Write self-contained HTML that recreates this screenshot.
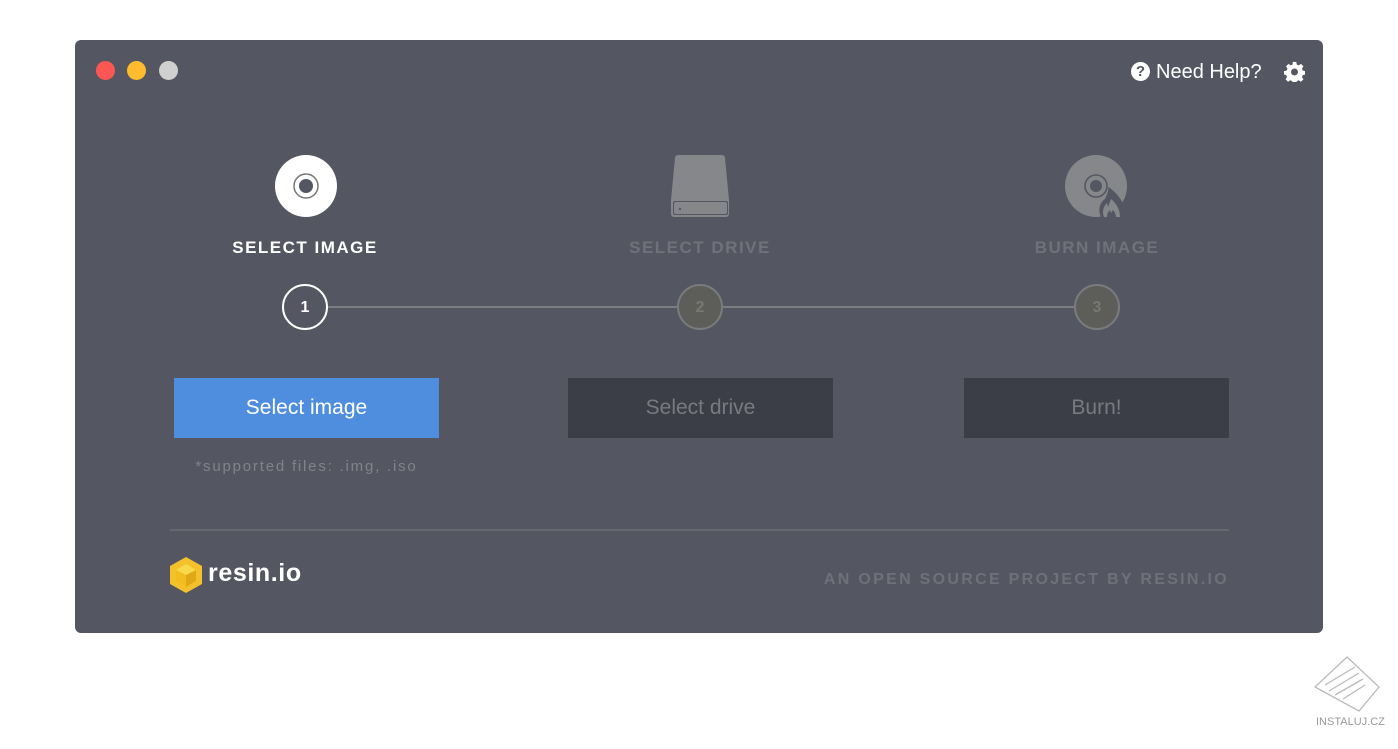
<!DOCTYPE html>
<html><head><style>
body{margin:0;width:1398px;height:749px;background:#fff;position:relative;font-family:"Liberation Sans",sans-serif;overflow:hidden}
.win{position:absolute;left:75px;top:40px;width:1248px;height:593px;background:#545761;border-radius:6px}
.a{position:absolute}
.dot{position:absolute;top:61px;width:19px;height:19px;border-radius:50%}
.lbl{position:absolute;top:238px;width:300px;text-align:center;font-weight:bold;font-size:17px;letter-spacing:1.5px}
.c{position:absolute;top:284px;width:46px;height:46px;border-radius:50%;box-sizing:border-box;text-align:center;line-height:43px;font-weight:bold;font-size:16px}
.btn{position:absolute;top:378px;height:60px;width:265px;text-align:center;line-height:60px;font-size:21px}
</style></head><body>
<div class="win"></div>
<div class="dot" style="left:96px;background:#fc5753"></div>
<div class="dot" style="left:127px;background:#fdbc2e"></div>
<div class="dot" style="left:159px;background:#d0d0d0"></div>
<div class="a" style="left:1131px;top:62px;width:19px;height:19px;border-radius:50%;background:#fff;color:#545761;font-weight:bold;font-size:15px;text-align:center;line-height:20px">?</div>
<div class="a" style="left:1156px;top:61px;color:#fff;font-size:20px">Need Help?</div>
<svg class="a" style="left:1284px;top:61px" width="21" height="21" viewBox="0 0 24 24"><path fill="#fff" d="M10 1h4l.6 3 2.2 1 2.6-1.7 2.8 2.8L20.5 8.7l1 2.3 2.5.5v4l-2.5.6-1 2.2 1.7 2.6-2.8 2.8-2.6-1.7-2.2 1-.6 2.9h-4l-.6-2.9-2.2-1-2.6 1.7-2.8-2.8 1.7-2.6-1-2.2L0 15.5v-4l3-.5 1-2.3L2.3 6.1l2.8-2.8L7.7 5l2.2-1z M12 8.5a4 4 0 1 0 0 8a4 4 0 1 0 0-8z" fill-rule="evenodd"/></svg>
<svg class="a" style="left:275px;top:155px" width="62" height="62"><circle cx="31" cy="31" r="31" fill="#fff"/><circle cx="31" cy="31" r="12" fill="none" stroke="#777" stroke-width="1.5"/><circle cx="31" cy="31" r="7" fill="#545761"/></svg>
<svg class="a" style="left:670px;top:154px" width="62" height="64"><path d="M8 1h44a3 3 0 0 1 3 3l4 42v14a3 3 0 0 1-3 3H4a3 3 0 0 1-3-3V46L5 4a3 3 0 0 1 3-3z" fill="#85878b"/><rect x="3" y="47" width="55" height="14" rx="2" fill="#545761"/><rect x="4" y="48" width="53" height="12" rx="2" fill="#85878b"/><circle cx="10" cy="55" r="1.2" fill="#545761"/></svg>
<svg class="a" style="left:1065px;top:155px" width="64" height="64"><circle cx="31" cy="31" r="31" fill="#85878b"/><circle cx="31" cy="31" r="11" fill="none" stroke="#545761" stroke-width="1.6"/><circle cx="31" cy="31" r="6" fill="#545761"/><path d="M36 62c-3-6-2-14 4-18 2-5 4-8 3-12 7 4 14 12 16 20 0 4-1 8-3 10z" fill="#545761"/><path d="M39 62c-2-5-1-10 3-14l1 4 3-8c5 4 9 10 9 18z" fill="#85878b"/><path d="M42 62c0-3 1-5 3-7l1 3 2-3c2 2 3 5 3 7z" fill="#545761"/></svg>
<div class="lbl" style="left:155px;color:#fff">SELECT IMAGE</div>
<div class="lbl" style="left:550px;color:#6f727a">SELECT DRIVE</div>
<div class="lbl" style="left:947px;color:#6f727a">BURN IMAGE</div>
<div class="a" style="left:305px;top:306px;width:792px;height:2px;background:#7b7d81"></div>
<div class="c" style="left:282px;border:2.5px solid #fff;background:#545761;color:#fff">1</div>
<div class="c" style="left:677px;border:2.5px solid #797b7d;background:#5d5d59;color:#777872">2</div>
<div class="c" style="left:1074px;border:2.5px solid #797b7d;background:#5d5d59;color:#777872">3</div>
<div class="btn" style="left:174px;background:#4f8ede;color:#fff">Select image</div>
<div class="btn" style="left:568px;background:#3b3e47;color:#777a80">Select drive</div>
<div class="btn" style="left:964px;background:#3b3e47;color:#777a80">Burn!</div>
<div class="a" style="left:164px;top:458px;width:285px;text-align:center;color:#80838a;font-size:15px;letter-spacing:1.8px">*supported files: .img, .iso</div>
<div class="a" style="left:170px;top:529px;width:1059px;height:2px;background:#65686f"></div>
<svg class="a" style="left:168px;top:556px" width="36" height="38" viewBox="0 0 36 38"><path d="M18 1l16 9v18l-16 9-16-9V10z" fill="#f4c12a"/><path d="M18 8l10 6v11l-10 6-10-6V14z" fill="#f9d94a"/><path d="M18 19l10-5v11l-10 6z" fill="#e0a814"/><path d="M18 19L8 14v11l10 6z" fill="#f1bd1f"/></svg>
<div class="a" style="left:208px;top:559px;color:#fff;font-size:25px;font-weight:bold;letter-spacing:.6px">resin.io</div>
<div class="a" style="right:169px;top:571px;color:#6e7179;font-size:16px;font-weight:bold;letter-spacing:2.3px">AN OPEN SOURCE PROJECT BY RESIN.IO</div>
<svg class="a" style="left:1313px;top:655px" width="68" height="60"><g fill="none" stroke="#bbb" stroke-width="1.3"><path d="M34 2l32 30-20 24L2 32z"/><path d="M12 30l30-18M16 36l30-18M22 40l28-16M30 44l22-14"/></g></svg>
<div class="a" style="left:1316px;top:716px;color:#999;font-size:11px">INSTALUJ.CZ</div>
</body></html>
